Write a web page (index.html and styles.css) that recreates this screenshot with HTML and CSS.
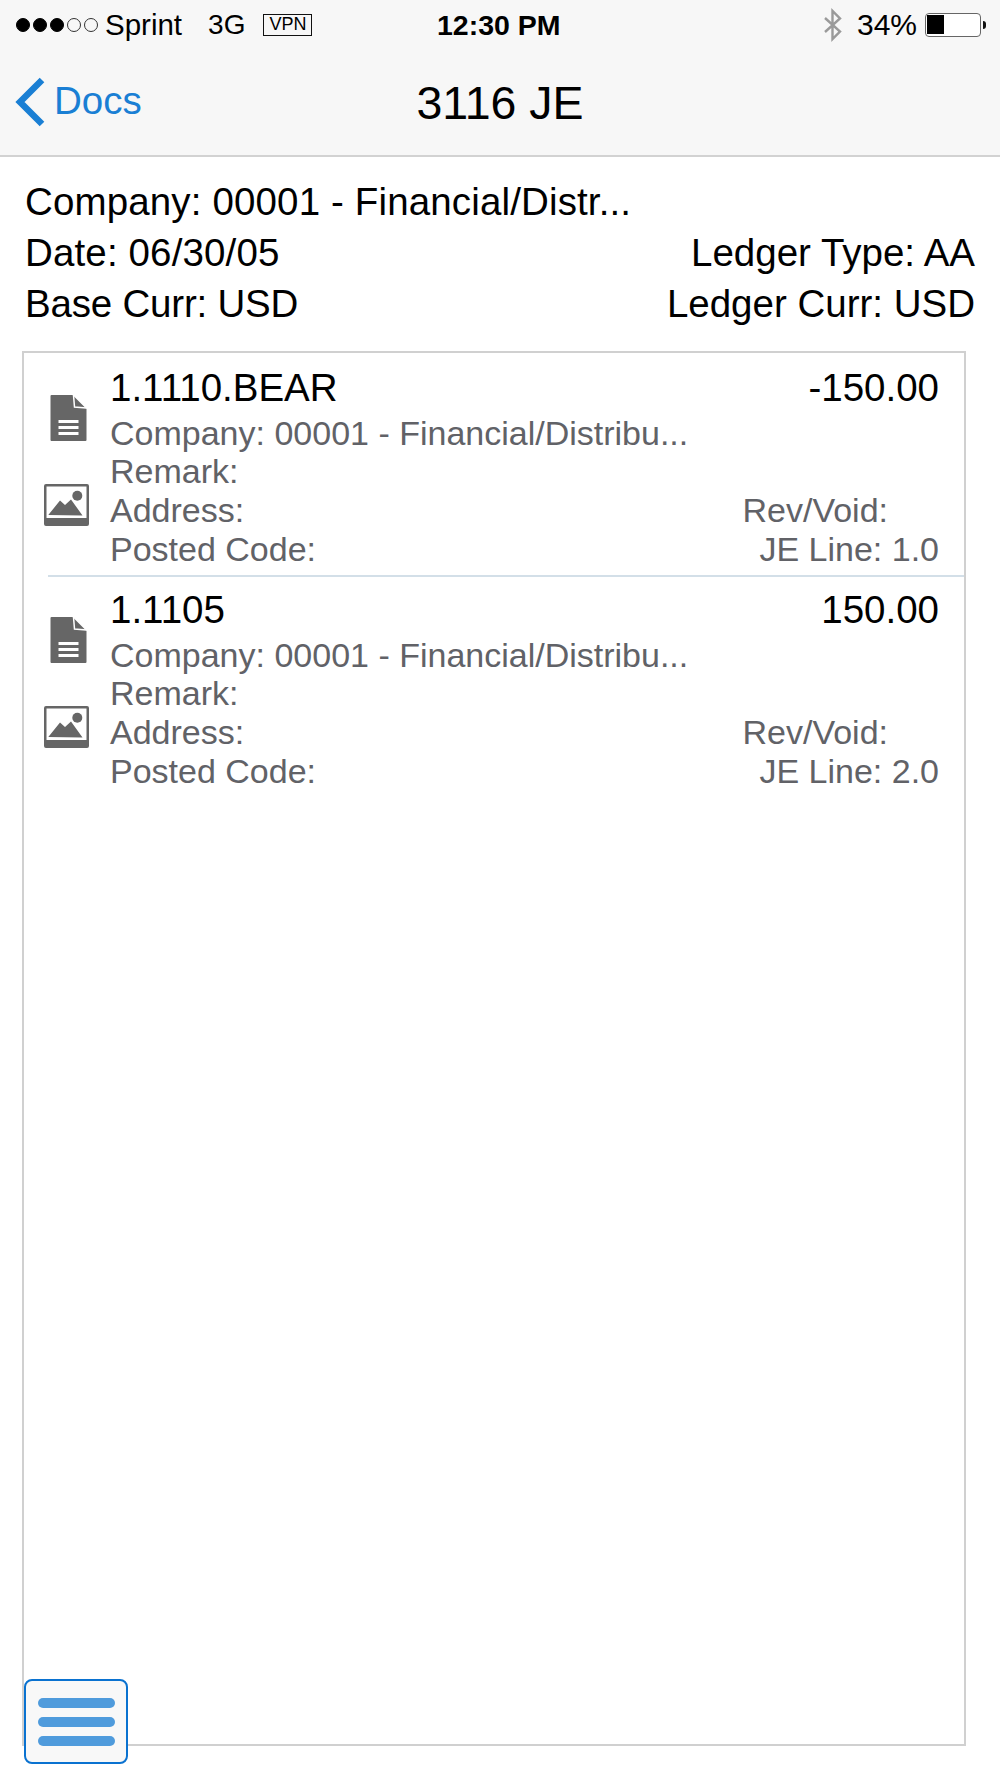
FILE: index.html
```html
<!DOCTYPE html>
<html lang="en">
<head>
<meta charset="utf-8">
<title>3116 JE</title>
<link rel="stylesheet" href="styles.css">
</head>
<body>
<div class="page">
  <header class="top">
    <div class="status">
      <div class="status-left">
        <span class="dots"><i class="dot on"></i><i class="dot on"></i><i class="dot on"></i><i class="dot"></i><i class="dot"></i></span>
        <span class="carrier">Sprint</span>
        <span class="net">3G</span>
        <span class="vpn">VPN</span>
      </div>
      <div class="clock">12:30 PM</div>
      <div class="status-right">
        <svg class="bt" width="20" height="34" viewBox="0 0 20 34"><path d="M2 10 L17 23.5 L9.5 31 V3 L17 10.5 L2 24" fill="none" stroke="#9a9a9a" stroke-width="2.4"/></svg>
        <span class="pct">34%</span>
        <span class="battery"><span class="level"></span></span><span class="nub"></span>
      </div>
    </div>
    <nav class="nav">
      <div class="back">
        <svg width="32" height="52" viewBox="0 0 32 52"><path d="M28 4 L6 26 L28 48" fill="none" stroke="#1a7fd4" stroke-width="6.5"/></svg>
        <span class="back-label">Docs</span>
      </div>
      <h1 class="title">3116 JE</h1>
    </nav>
  </header>
  <section class="summary">
    <div class="sline wide">Company: 00001 - Financial/Distr...</div>
    <div class="sline split"><span class="wide">Date: 06/30/05</span><span>Ledger Type: AA</span></div>
    <div class="sline split"><span class="tight">Base Curr: USD</span><span>Ledger Curr: USD</span></div>
  </section>
  <section class="list">
    <article class="item">
      <div class="icons">
        <svg class="doc" width="37" height="46" viewBox="0 0 36 46"><path class="ic" fill-rule="evenodd" d="M1 0H22L36 14V45a1 1 0 0 1-1 1H1a1 1 0 0 1-1-1V1a1 1 0 0 1 1-1Z M8 25V28H28V25Z M8 31V34H28V31Z M8 37V40H28V37Z"/><path d="M23 0 L24 12 L36 13" fill="none" stroke="#fff" stroke-width="1.5"/></svg>
        <svg class="img" width="45" height="42" viewBox="0 0 45 42"><path class="ic" fill-rule="evenodd" d="M2 0H43a2 2 0 0 1 2 2V40a2 2 0 0 1-2 2H2a2 2 0 0 1-2-2V2a2 2 0 0 1 2-2Z M2.5 2.5V34H42.500V2.500Z"/><circle class="ic" cx="33.300" cy="11.700" r="5"/><path class="ic" d="M4.300 31 L16 16.500 L21 21 L27 15.500 L38.500 31.500Z"/></svg>
      </div>
      <div class="body">
        <div class="row head"><span>1.1110.BEAR</span><span>-150.00</span></div>
        <div class="row company">Company: 00001 - Financial/Distribu...</div>
        <div class="row remark">Remark:</div>
        <div class="row address"><span>Address:</span><span class="rev">Rev/Void:</span></div>
        <div class="row"><span>Posted Code:</span><span>JE Line: 1.0</span></div>
      </div>
    </article>
    <article class="item">
      <div class="icons">
        <svg class="doc" width="37" height="46" viewBox="0 0 36 46"><path class="ic" fill-rule="evenodd" d="M1 0H22L36 14V45a1 1 0 0 1-1 1H1a1 1 0 0 1-1-1V1a1 1 0 0 1 1-1Z M8 25V28H28V25Z M8 31V34H28V31Z M8 37V40H28V37Z"/><path d="M23 0 L24 12 L36 13" fill="none" stroke="#fff" stroke-width="1.5"/></svg>
        <svg class="img" width="45" height="42" viewBox="0 0 45 42"><path class="ic" fill-rule="evenodd" d="M2 0H43a2 2 0 0 1 2 2V40a2 2 0 0 1-2 2H2a2 2 0 0 1-2-2V2a2 2 0 0 1 2-2Z M2.5 2.5V34H42.500V2.500Z"/><circle class="ic" cx="33.300" cy="11.700" r="5"/><path class="ic" d="M4.300 31 L16 16.500 L21 21 L27 15.500 L38.500 31.500Z"/></svg>
      </div>
      <div class="body">
        <div class="row head"><span>1.1105</span><span>150.00</span></div>
        <div class="row company">Company: 00001 - Financial/Distribu...</div>
        <div class="row remark">Remark:</div>
        <div class="row address"><span>Address:</span><span class="rev">Rev/Void:</span></div>
        <div class="row"><span>Posted Code:</span><span>JE Line: 2.0</span></div>
      </div>
    </article>
    <button class="menu" type="button" aria-label="Menu"><i></i><i></i><i></i></button>
  </section>
</div>
</body>
</html>
```
FILE: styles.css
```css
* { box-sizing: border-box; }
html, body { margin: 0; padding: 0; background: #fff; }
body { font-family: "Liberation Sans", Arial, sans-serif; color: #000; }
.page { width: 1000px; height: 1778px; display: flex; flex-direction: column; }
.top { height: 157px; background: #f7f7f7; border-bottom: 2px solid #d2d2d2; flex: none; }
.status { height: 50px; display: flex; align-items: center; justify-content: space-between; padding: 0 14px 0 16px; position: relative; }
.status-left { display: flex; align-items: center; font-size: 29.500px; }
.dots { display: flex; gap: 3px; margin-right: 7px; }
.dot { width: 14px; height: 14px; border-radius: 50%; border: 1px solid #333; display: block; }
.dot.on { background: #000; border-color: #000; }
.net { margin-left: 26px; font-size: 28px; }
.vpn { margin-left: 18px; font-size: 18px; line-height: 19px; border: 1.500px solid #111; padding: 0 5px; height: 22px; }
.clock { position: absolute; left: 437px; top: 9px; font-size: 28.500px; font-weight: 700; }
.status-right { display: flex; align-items: center; font-size: 30px; }
.bt { margin-right: 14px; }
.battery { width: 56px; height: 24px; border: 1.500px solid #666; border-radius: 4px; margin-left: 8px; padding: 1px; display: block; background: #fff; }
.level { display: block; height: 19px; width: 17px; background: #000; }
.nub { width: 3px; height: 8px; background: #111; margin-left: 2px; border-radius: 0 3px 3px 0; }
.nav { height: 105px; position: relative; display: flex; align-items: center; justify-content: center; }
.back { position: absolute; left: 14px; top: 25px; display: flex; align-items: center; color: #1a7fd4; font-size: 38.500px; gap: 8px; }
.back svg { margin-top: 1px; }
.back-label { margin-top: -2px; }
.title { margin: 0; font-weight: 400; font-size: 46.500px; }
.summary { padding: 19px 25px 0 25px; flex: none; height: 194px; }
.sline { font-size: 38.500px; line-height: 51px; height: 51px; white-space: nowrap; }
.wide { letter-spacing: 0.140px; }
.tight { letter-spacing: -0.200px; }
.split { display: flex; justify-content: space-between; }
.list { position: relative; margin-left: 22px; width: 944px; height: 1395px; border: 2px solid #d0d0d0; flex: none; }
.item { display: flex; margin-left: 24px; height: 222px; padding-top: 12px; }
.item + .item { border-top: 2px solid #d3dfe8; padding-top: 10px; }
.icons { width: 62px; flex: none; display: flex; flex-direction: column; align-items: flex-start; padding-top: 30px; gap: 43px; }
.doc { margin-left: 2px; }
.img { margin-left: -4px; }
.ic { fill: #666; }
.body { flex: 1; padding-right: 25px; color: #616267; font-size: 34px; }
.row { display: flex; justify-content: space-between; line-height: 38px; height: 38px; white-space: nowrap; }
.head { color: #000; font-size: 38.500px; line-height: 46px; height: 46px; }
.company { margin-top: 1px; height: 40px; line-height: 42px; }
.remark { height: 39px; }
.address { height: 39px; }
.rev { margin-right: 51px; }
.menu { position: absolute; left: 0; top: 1326px; width: 104px; height: 85px; border: 2px solid #0a72d0; border-radius: 8px; background: #f8f8f8; display: flex; flex-direction: column; justify-content: center; align-items: center; gap: 9px; padding: 0; }
.menu i { display: block; width: 77px; height: 10px; border-radius: 5px; background: #4f9bdc; }
```
